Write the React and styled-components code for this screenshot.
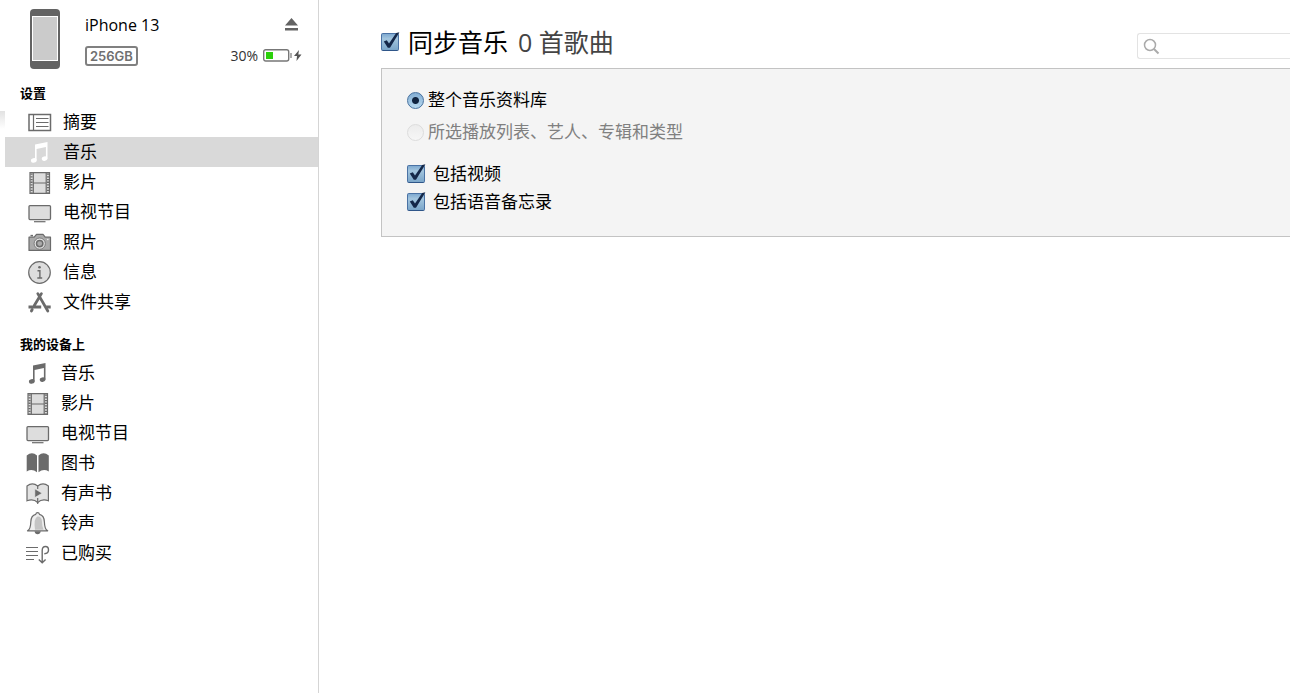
import { useState } from "react";
import styled, { createGlobalStyle } from "styled-components";

const GlobalStyle = createGlobalStyle`
  * {
    box-sizing: border-box;
  }
  body {
    margin: 0;
    background: #fff;
    color: #000;
    font-family: "Open Sans", "Noto Sans CJK SC", sans-serif;
    font-size: 17px;
  }
`;

const Layout = styled.div`
  display: flex;
  min-height: 100vh;
`;

const Sidebar = styled.aside`
  position: relative;
  flex: 0 0 319px;
  border-right: 1px solid #d5d5d5;
`;

const EdgeShadow = styled.span`
  position: absolute;
  left: 0;
  top: 111px;
  width: 5px;
  height: 18px;
  background: linear-gradient(#e2e2e2, #fff);
`;

const Device = styled.header`
  display: flex;
  height: 80px;
  padding: 9px 16px 0 29px;
`;

const DeviceInfo = styled.div`
  flex: 1;
  margin-left: 24px;
`;

const DeviceLine = styled.div`
  display: flex;
  align-items: center;
  justify-content: space-between;
  height: 31px;
`;

const DeviceName = styled.span`
  font-size: 16px;
`;

const Capacity = styled.span`
  height: 20px;
  padding: 0 3px;
  border: 2px solid #808080;
  border-radius: 3px;
  color: #707070;
  font: 600 13px/16px Inter, sans-serif;
`;

const EjectButton = styled.button`
  display: flex;
  margin-right: 4px;
  padding: 0;
  border: 0;
  background: none;
`;

const Battery = styled.span`
  display: flex;
  align-items: center;
  gap: 5px;
  color: #333;
  font-size: 14px;
`;

const SectionTitle = styled.h2`
  margin: 0;
  padding-left: 20px;
  font-size: 13px;
  font-weight: 700;
  line-height: 27px;
`;

const Menu = styled.ul`
  margin: 0 0 14px;
  padding: 0 0 0 5px;
  list-style: none;
`;

const MenuLink = styled.a`
  display: flex;
  align-items: center;
  gap: 11px;
  height: 30px;
  padding-left: ${props => props.$indent};
  background: ${props => (props.$active ? "#d9d9d9" : "transparent")};
  color: #000;
  line-height: 30px;
  text-decoration: none;

  svg {
    color: ${props => (props.$active ? "#fff" : "#6b6b6b")};
  }
`;

const Main = styled.main`
  flex: 1;
  min-width: 0;
  padding-left: 62px;
`;

const Toolbar = styled.div`
  display: flex;
  align-items: center;
  height: 68px;
  padding-top: 16px;
`;

const Heading = styled.h1`
  margin: 0;
  font-size: 25px;
  font-weight: 400;
  line-height: 36px;
`;

const SongCount = styled.span`
  margin-left: 10px;
  color: #444;
  font-size: 25px;
  line-height: 36px;
`;

const SearchBox = styled.label`
  display: flex;
  align-items: center;
  width: 153px;
  height: 26px;
  margin: 8px 0 0 auto;
  padding-left: 5px;
  border: 1px solid #e3e3e3;
  border-right: 0;
  border-radius: 3px 0 0 3px;

  input {
    flex: 1;
    min-width: 0;
    border: 0;
    outline: 0;
    background: none;
    font: inherit;
    font-size: 14px;
  }
`;

const Panel = styled.section`
  padding: 15px 25px 20px;
  border: 1px solid #c3c3c3;
  border-right: 0;
  background: #f4f4f4;
`;

const Options = styled.div`
  margin-bottom: ${props => props.$space || "0"};
`;

const Option = styled.label`
  display: flex;
  align-items: center;
  gap: ${props => props.$gap};
  height: ${props => props.$height};
  color: ${props => (props.$muted ? "#808080" : "#000")};
  line-height: ${props => props.$height};
`;

const CheckWrap = styled.span`
  position: relative;
  display: flex;

  svg {
    position: absolute;
    left: 0;
    top: -2px;
    pointer-events: none;
  }
`;

const CheckInput = styled.input`
  appearance: none;
  width: 18px;
  height: 18px;
  margin: 0;
  border: 1px solid #4a72a4;
  border-bottom-color: #2f5689;
  border-radius: 2px;
  background: linear-gradient(#7fa9d0, #a3c5de 30%, #7ba6c9);
`;

const Radio = styled.input`
  appearance: none;
  width: 17px;
  height: 17px;
  margin: 0;
  border: 1px solid #dcdcdc;
  border-radius: 50%;
  background: linear-gradient(#ececec, #f6f6f6);

  &:checked {
    border-color: #47719f;
    background: radial-gradient(circle, #10233f 3px, transparent 4px),
      linear-gradient(#82add3, #b8d9ef);
  }
`;

const Checkbox = ({ id, checked, onChange }) => (
  <CheckWrap>
    <CheckInput type="checkbox" id={id} checked={checked} onChange={onChange} />
    {checked && (
      <svg width="20" height="20" viewBox="0 0 20 20">
        <path d="M2.8 10.6 5.8 9.2 8 12.6 15.2 2 18.4 1.2 9 16.8H6.8Z" fill="#142748" />
      </svg>
    )}
  </CheckWrap>
);

const Icon = ({ children }) => (
  <svg width="24" height="24" viewBox="0 0 24 24" fill="none" stroke="currentColor" strokeWidth="1.5">
    {children}
  </svg>
);

const SummaryIcon = () => (
  <Icon>
    <path d="M1 4.5H22.5V20.5H1Z" fill="#fff" />
    <path d="M5.5 4.5V20.5M8 8.5H20.5M8 12.5H20.5M8 16.5H20.5" strokeWidth="1.2" />
  </Icon>
);

const MusicIcon = () => (
  <Icon>
    <g fill="currentColor" stroke="none">
      <path d="M7 4.6 19.5 2V18.5H17.9V7L8.6 9V20.5H7Z" />
      <ellipse cx="5.8" cy="20.4" rx="2.9" ry="2.3" transform="rotate(-15 5.8 20.4)" />
      <ellipse cx="16.6" cy="18.6" rx="2.9" ry="2.3" transform="rotate(-15 16.6 18.6)" />
    </g>
  </Icon>
);

const FilmIcon = () => (
  <Icon>
    <path d="M2 2.6H21.5V23.4H2Z" fill="#ddd" strokeWidth="1.2" />
    <path d="M5.3 2.5V23.5M18.2 2.5V23.5M5.3 13H18.2" strokeWidth="1.2" />
    <path d="M3.5 3.5V23M20 3.5V23" strokeWidth="2.2" strokeDasharray="1.3 1.4" />
  </Icon>
);

const ScreenIcon = () => (
  <Icon>
    <rect x="1" y="5.6" width="21.5" height="14" rx="1" fill="#ddd" strokeWidth="1.3" />
    <path d="M6 21.7H17.5" strokeWidth="1.2" />
  </Icon>
);

const CameraIcon = () => (
  <Icon>
    <path
      d="M1 7.2H6.2L8.5 4.4H15L17.2 7.2H22.5V20.4H1Z"
      fill="#aaa"
      strokeWidth="1.2"
      strokeLinejoin="round"
    />
    <path d="M2.5 5.6H5" />
    <circle cx="11.7" cy="13.6" r="5.6" fill="#e6e6e6" strokeWidth=".8" />
    <circle cx="11.7" cy="13.6" r="3.2" fill="#aaa" />
    <circle cx="19.8" cy="9.5" r="0.8" fill="#eee" stroke="none" />
  </Icon>
);

const InfoIcon = () => (
  <Icon>
    <circle cx="11.5" cy="12.5" r="10.8" fill="#ddd" strokeWidth="1.2" />
    <circle cx="11.5" cy="7.3" r="1.3" fill="currentColor" stroke="none" />
    <path d="M9.5 10.8H11.9V17.7M9.3 18H14.2" strokeWidth="1.4" />
  </Icon>
);

const AppsIcon = () => (
  <Icon>
    <g strokeWidth="2.8" strokeLinecap="round">
      <path d="M13.4 3.6 6.3 15.5M9.8 3.6 19.8 21M4.2 19.5 3.4 21" />
      <path d="M.5 17H13.2M18.2 17H22.7" strokeLinecap="butt" />
    </g>
  </Icon>
);

const BookIcon = () => (
  <Icon>
    <path
      d="M.7 4.5Q6-.1 11 4.5V21.3Q6 17.3.7 20.5ZM12.5 4.5Q17.5-.1 22.8 4.5V20.5Q17.5 17.3 12.5 21.3Z"
      fill="currentColor"
      stroke="none"
    />
  </Icon>
);

const AudiobookIcon = () => (
  <Icon>
    <path
      d="M1 5Q6.5.8 11.7 5Q17 .8 22.4 5V19.8Q16 17.5 11.7 21.5Q7.5 17.5 1 19.8Z"
      fill="#e2e2e2"
      strokeWidth="1.2"
    />
    <path d="M11.7 5V8M11.7 17V23" strokeWidth="1.2" />
    <path d="M8.8 7.8 16.2 12.2 8.8 16.6Z" fill="currentColor" stroke="#eee" strokeWidth=".6" />
  </Icon>
);

const BellIcon = () => (
  <Icon>
    <path
      d="M1.5 19.8Q4.6 18.4 4.8 11Q5 4.2 9.8 3.3Q10 1.6 11.6 1.6Q13.2 1.6 13.4 3.3Q18.2 4.2 18.4 11Q18.6 18.4 21.7 19.8Z"
      fill="#eee"
      strokeWidth="1.2"
      strokeLinejoin="round"
    />
    <path d="M9 18.8Q7.5 7 11.5 5.5Q15.8 5 16 11Q16 16 17.6 18.8Z" fill="#c4c4c4" stroke="none" />
    <path d="M8.5 20.3H14.8Q14.2 23.2 11.6 23.2Q9 23.2 8.5 20.3Z" fill="currentColor" stroke="none" />
  </Icon>
);

const PurchasedIcon = () => (
  <Icon>
    <path d="M0 6.5H12M0 10.5H12M0 14.5H12M0 18.5H8" strokeWidth="1.2" />
    <path d="M16.2 21.5V9.5Q16.2 5.5 19.5 5.5Q22.5 5.5 22.5 9Q22.5 12.5 18.3 12.8M12.8 18.4 16.2 21.8 19.6 18.4" strokeWidth="1.4" />
  </Icon>
);

const settings = [
  { name: "摘要", icon: SummaryIcon },
  { name: "音乐", icon: MusicIcon, active: true },
  { name: "影片", icon: FilmIcon },
  { name: "电视节目", icon: ScreenIcon },
  { name: "照片", icon: CameraIcon },
  { name: "信息", icon: InfoIcon },
  { name: "文件共享", icon: AppsIcon },
];

const onDevice = [
  { name: "音乐", icon: MusicIcon },
  { name: "影片", icon: FilmIcon },
  { name: "电视节目", icon: ScreenIcon },
  { name: "图书", icon: BookIcon },
  { name: "有声书", icon: AudiobookIcon },
  { name: "铃声", icon: BellIcon },
  { name: "已购买", icon: PurchasedIcon },
];

const MenuSection = ({ title, items, indent }) => (
  <nav>
    <SectionTitle>{title}</SectionTitle>
    <Menu>
      {items.map(({ name, icon: ItemIcon, active }) => (
        <li key={name}>
          <MenuLink href="#" $indent={indent} $active={active}>
            <ItemIcon />
            {name}
          </MenuLink>
        </li>
      ))}
    </Menu>
  </nav>
);

const DeviceHeader = () => (
  <Device>
    <svg width="32" height="60" viewBox="0 0 32 60">
      <rect x="1" y="0" width="30" height="60" rx="4" fill="#636363" />
      <rect x="3.5" y="7.5" width="25" height="44" fill="#cbcbcb" stroke="#fff" />
    </svg>
    <DeviceInfo>
      <DeviceLine>
        <DeviceName>iPhone 13</DeviceName>
        <EjectButton aria-label="推出">
          <svg width="13" height="13" viewBox="0 0 13 13" fill="#636363">
            <path d="M6.5 0 13 7.5H0ZM0 10H13V12.5H0Z" />
          </svg>
        </EjectButton>
      </DeviceLine>
      <DeviceLine>
        <Capacity>256GB</Capacity>
        <Battery>
          30%
          <svg width="39" height="13" viewBox="0 0 39 13">
            <rect x=".7" y=".7" width="25" height="11.3" rx="2" fill="#fff" stroke="#777" strokeWidth="1.4" />
            <rect x="3" y="3" width="7" height="7" fill="#2bd00b" />
            <path d="M28 4V9" stroke="#777" strokeWidth="1.2" />
            <path d="M36 1 31 7H34L33.5 12 38.5 5.5H35.3Z" fill="#555" />
          </svg>
        </Battery>
      </DeviceLine>
    </DeviceInfo>
  </Device>
);

const App = () => {
  const [sync, setSync] = useState(true);
  const [videos, setVideos] = useState(true);
  const [memos, setMemos] = useState(true);

  return (
    <>
      <GlobalStyle />
      <Layout>
        <Sidebar>
          <DeviceHeader />
          <MenuSection title="设置" items={settings} indent="23px" />
          <MenuSection title="我的设备上" items={onDevice} indent="21px" />
          <EdgeShadow />
        </Sidebar>
        <Main>
          <Toolbar>
            <Option as="div" $gap="9px" $height="36px">
              <Checkbox id="sync" checked={sync} onChange={() => setSync(!sync)} />
              <Heading>
                <label htmlFor="sync">同步音乐</label>
              </Heading>
            </Option>
            <SongCount>0 首歌曲</SongCount>
            <SearchBox>
              <svg width="17" height="17" viewBox="0 0 17 17" fill="none" stroke="#aaa" strokeWidth="1.5">
                <circle cx="7" cy="7" r="5.5" />
                <path d="M11 11 15.5 15.5" strokeWidth="2" />
              </svg>
              <input type="search" aria-label="搜索" />
            </SearchBox>
          </Toolbar>
          <Panel>
            <Options $space="12px">
              <Option $gap="4px" $height="32px">
                <Radio type="radio" name="library" defaultChecked />
                整个音乐资料库
              </Option>
              <Option $gap="4px" $height="32px" $muted>
                <Radio type="radio" name="library" />
                所选播放列表、艺人、专辑和类型
              </Option>
            </Options>
            <Options>
              <Option $gap="8px" $height="28px">
                <Checkbox checked={videos} onChange={() => setVideos(!videos)} />
                包括视频
              </Option>
              <Option $gap="8px" $height="28px">
                <Checkbox checked={memos} onChange={() => setMemos(!memos)} />
                包括语音备忘录
              </Option>
            </Options>
          </Panel>
        </Main>
      </Layout>
    </>
  );
};

export default App;
